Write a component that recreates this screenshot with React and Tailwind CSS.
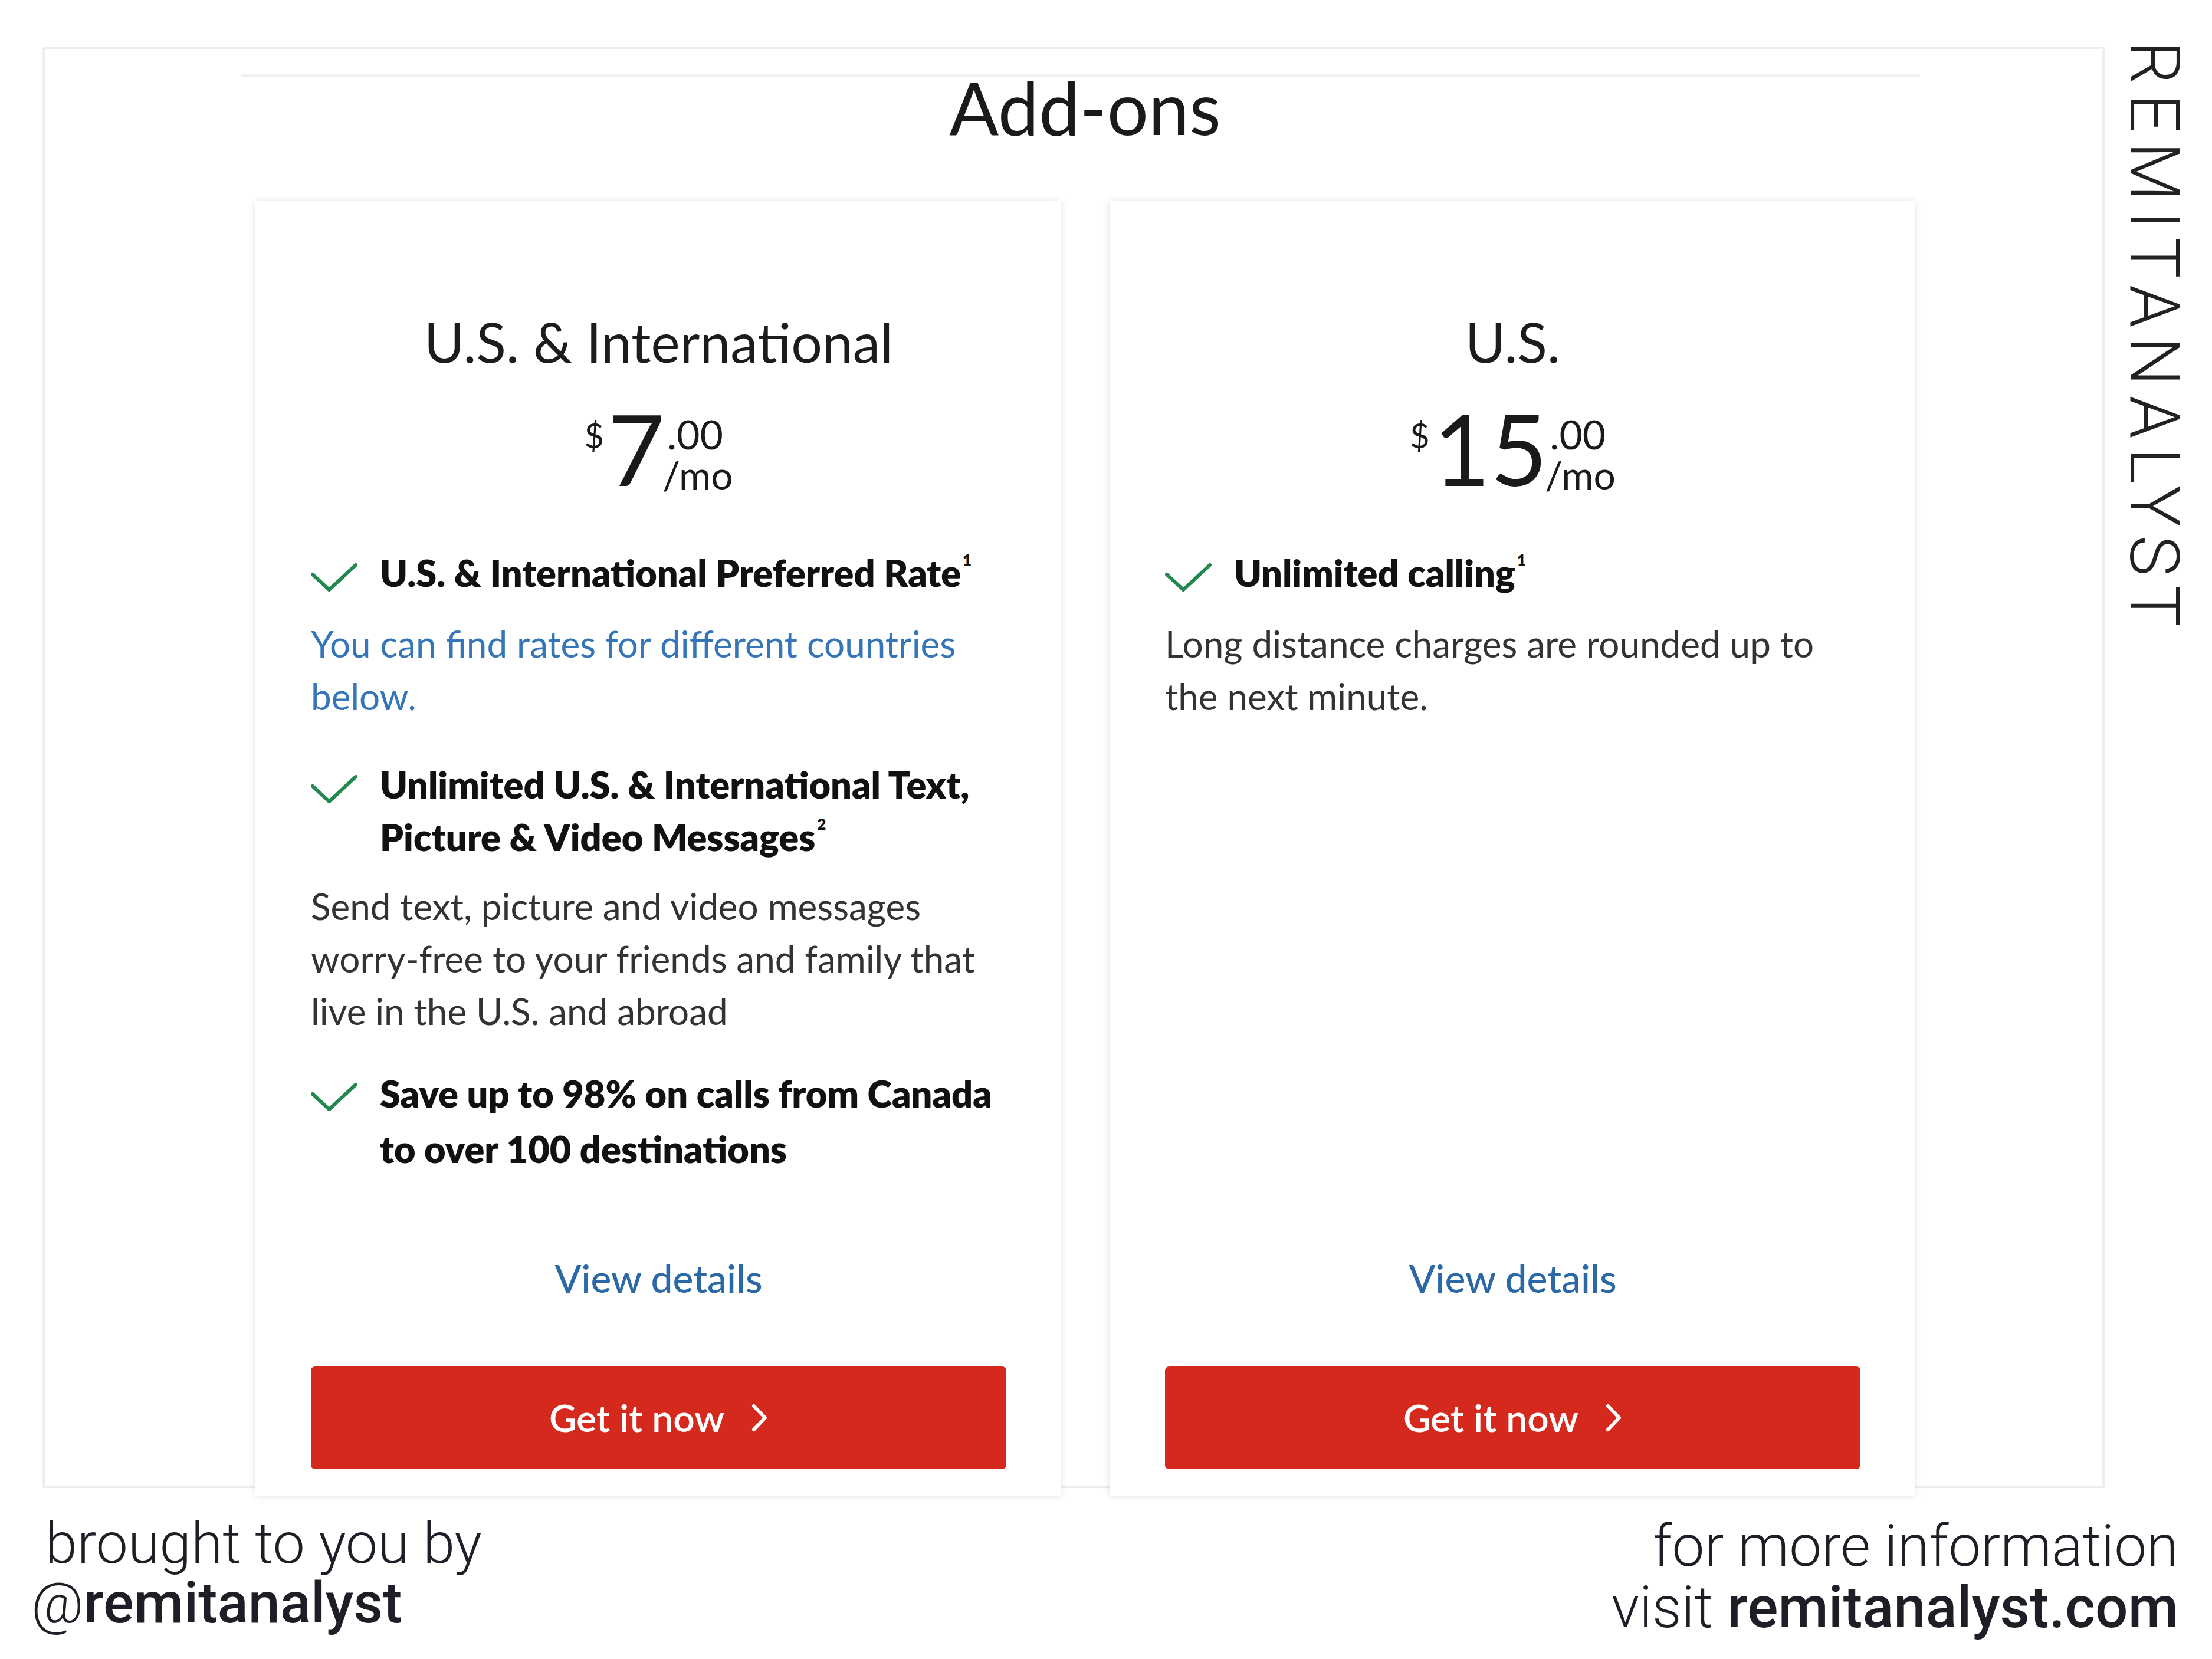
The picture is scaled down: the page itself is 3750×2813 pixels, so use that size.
function Check() {
  return (
    <svg width="79" height="48" viewBox="0 0 79 48" fill="none" className="shrink-0 mt-[29px]">
      <path d="M3 19 L31 45 L76 3" stroke="#22884f" strokeWidth="6" strokeLinecap="round" strokeLinejoin="round" />
    </svg>
  )
}

function Feature({ title, sup, lh = 'leading-[89px]', className = '' }) {
  return (
    <div className={`flex ${className}`}>
      <Check />
      <div className={`ml-[38px] text-[63px] ${lh} font-extrabold text-[#111111] whitespace-nowrap`}>
        {title}
        {sup && <span className="text-[26px] leading-none align-[1.4em] ml-[3px]">{sup}</span>}
      </div>
    </div>
  )
}

function Desc({ children, blue, className = '' }) {
  return (
    <p className={`text-[62px] leading-[89px] whitespace-nowrap ${blue ? 'text-[#3476b8]' : 'text-[#333333]'} ${className}`}>
      {children}
    </p>
  )
}

function Price({ amount }) {
  return (
    <div className="mt-[41px] flex items-start justify-center text-[#1a1a1a]">
      <span className="text-[58px] leading-none mt-[33px] mr-[6px]">$</span>
      <span className="text-[167px] leading-none">{amount}</span>
      <div className="flex flex-col mt-[26px] ml-[4px]">
        <span className="text-[68px] leading-none">.00</span>
        <span className="text-[66px] leading-none -ml-[8px] mt-[2px]">/mo</span>
      </div>
    </div>
  )
}

function Card({ title, amount, children }) {
  return (
    <div className="h-[2195px] bg-white shadow-[0_0_12px_rgba(0,0,0,0.13)] flex flex-col pt-[182px] pl-[94px] pr-[92px] pb-[45px]">
      <h2 className="text-center text-[93px] leading-[112px] text-[#1c1c1c]">{title}</h2>
      <Price amount={amount} />
      <div className="mt-[83px]">{children}</div>
      <div className="mt-auto">
        <div className="text-center text-[66px] leading-[89px] font-medium text-[#2b68a6]">View details</div>
        <button className="mt-[106px] w-full h-[174px] rounded-[7px] bg-[#d6291d] text-white flex items-center justify-center">
          <span className="text-[64px] font-semibold">Get it now</span>
          <svg width="28" height="48" viewBox="0 0 28 48" fill="none" className="ml-[46px]">
            <path d="M4 4 L23 24 L4 44" stroke="white" strokeWidth="6" strokeLinecap="round" strokeLinejoin="round" />
          </svg>
        </button>
      </div>
    </div>
  )
}

export default function App() {
  return (
    <div className="w-[3750px] h-[2813px] bg-white overflow-hidden flex flex-col">
      <div className="flex items-start">
        <div className="ml-[72px] mt-[79px] w-[3496px] h-[2444px] border-[4px] border-[#eeeeee] pt-[42px] font-['Lato',sans-serif]">
          <div className="ml-[333px] w-[2846px] border-t-[5px] border-[#f1f1f1] pl-[24px]">
            <h1 className="mt-[1px] w-[2813px] text-center text-[124px] leading-[100px] font-normal text-[#1a1a1a]">Add-ons</h1>
            <div className="mt-[110px] grid grid-cols-[1365px_1365px] gap-[83px]">
              <Card title="U.S. & International" amount="7">
                <Feature title="U.S. & International Preferred Rate" sup="1" />
                <Desc blue className="mt-[32px]">
                  You can find rates for different countries
                  <br />
                  below.
                </Desc>
                <Feature
                  className="mt-[60px]"
                  sup="2"
                  title={<>Unlimited U.S. & International Text,<br />Picture & Video Messages</>}
                />
                <Desc className="mt-[29px]">
                  Send text, picture and video messages
                  <br />
                  worry-free to your friends and family that
                  <br />
                  live in the U.S. and abroad
                </Desc>
                <Feature
                  className="mt-[48px]"
                  lh="leading-[94px]"
                  title={<>Save up to 98% on calls from Canada<br />to over 100 destinations</>}
                />
              </Card>
              <Card title="U.S." amount="15">
                <Feature title="Unlimited calling" sup="1" />
                <Desc className="mt-[32px]">
                  Long distance charges are rounded up to
                  <br />
                  the next minute.
                </Desc>
              </Card>
            </div>
          </div>
        </div>
        <div className="ml-[26px] mt-[69px] [writing-mode:vertical-rl] text-[116px] leading-[116px] tracking-[16px] font-light text-[#222222] font-['Roboto',sans-serif]">
          REMITANALYST
        </div>
      </div>
      <div className="flex justify-between items-start font-['Roboto',sans-serif] text-[#1e1e26]">
        <div className="pl-[77px] mt-[44px] text-[97px] leading-[101px]">
          <div className="font-light">brought to you by</div>
          <div className="-ml-[24px]">
            <span className="font-light">@</span>
            <span className="font-medium">remitanalyst</span>
          </div>
        </div>
        <div className="pr-[57px] mt-[47px] text-right text-[98px] leading-[104px]">
          <div className="font-light">for more information</div>
          <div>
            <span className="font-light">visit </span>
            <span className="font-medium">remitanalyst.com</span>
          </div>
        </div>
      </div>
    </div>
  )
}
